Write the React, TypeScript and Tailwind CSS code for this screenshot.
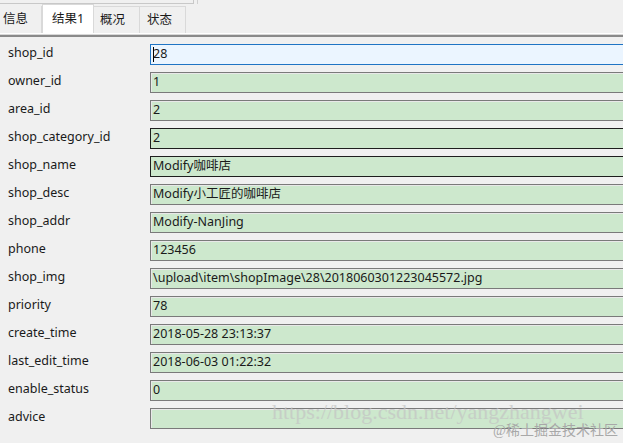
import React from "react";

const rows: { label: string; value: string; kind?: "focus" | "dark" }[] = [
  { label: "shop_id", value: "28", kind: "focus" },
  { label: "owner_id", value: "1" },
  { label: "area_id", value: "2" },
  { label: "shop_category_id", value: "2", kind: "dark" },
  { label: "shop_name", value: "Modify咖啡店", kind: "dark" },
  { label: "shop_desc", value: "Modify小工匠的咖啡店" },
  { label: "shop_addr", value: "Modify-NanJing" },
  { label: "phone", value: "123456" },
  { label: "shop_img", value: "\\upload\\item\\shopImage\\28\\2018060301223045572.jpg" },
  { label: "priority", value: "78" },
  { label: "create_time", value: "2018-05-28 23:13:37" },
  { label: "last_edit_time", value: "2018-06-03 01:22:32" },
  { label: "enable_status", value: "0" },
  { label: "advice", value: "" },
];

const font = { fontFamily: '"Noto Sans", "Noto Sans CJK SC", sans-serif' };

export default function App() {
  return (
    <div
      className="relative w-[623px] h-[443px] overflow-hidden bg-[#f0f0f0] text-[12.5px] text-[#1a1a1a]"
      style={font}
    >
      {/* top strip */}
      <div className="flex h-[4px]">
        <div className="w-[194px] border-b border-r border-[#c8c8c8] bg-[#f0f0f0]" />
        <div className="w-[3px]" />
        <div className="w-[1px] bg-[#d0d0d0]" />
      </div>
      {/* tabs */}
      <div className="flex h-[29px] items-end">
        <div className="flex h-[27px] w-[42px] items-center border-r border-[#d9d9d9] pl-[3px] leading-none">
          信息
        </div>
        <div className="flex h-[29px] w-[52px] items-center justify-center border-x border-t border-[#d9d9d9] bg-white leading-none">
          结果1
        </div>
        <div className="flex h-[27px] w-[46px] items-center border-r border-t border-[#d9d9d9] pl-[6px] leading-none">
          概况
        </div>
        <div className="flex h-[27px] w-[46px] items-center border-r border-t border-[#d9d9d9] pl-[7px] leading-none">
          状态
        </div>
      </div>
      <div className="h-[1px] bg-white" />
      <div className="h-[1px] bg-[#d8d8d8]" />
      <div className="h-[2px] bg-[#8a8a8a]" />
      {/* rows */}
      <div className="flex flex-col gap-[7px] pt-[7px]">
        {rows.map((r) => (
          <div key={r.label} className="flex h-[21px] items-center">
            <div className="w-[150px] shrink-0 pl-[8px] -mt-[3px] leading-none">{r.label}</div>
            <div
              className={
                r.kind === "focus"
                  ? "flex h-[21px] flex-1 -mr-[4px] items-center border border-[#1f74c4] bg-[#ebf5ff] pl-[2px] leading-none"
                  : r.kind === "dark"
                  ? "flex h-[21px] flex-1 -mr-[4px] items-center border border-[#1e1e1e] bg-[#cde8cd] pl-[2px] leading-none"
                  : "flex h-[21px] flex-1 -mr-[4px] items-center border border-[#7a7a7a] bg-[#cde8cd] pl-[2px] leading-none shadow-[inset_1px_1px_0_#e8e8e8]"
              }
            >
              {r.kind === "focus" ? (
                <span className="flex items-center">
                  <span className="inline-block h-[15px] w-[1px] bg-black -mr-[1px]" />
                  {r.value}
                </span>
              ) : (
                r.value
              )}
            </div>
          </div>
        ))}
      </div>
      {/* watermarks */}
      <div
        className="pointer-events-none absolute left-[272px] top-[401px] whitespace-nowrap text-[22px] leading-none text-[#c4c4c4] opacity-70"
        style={{ fontFamily: '"Liberation Serif", serif' }}
      >
        https://blog.csdn.net/yangzhangwei
      </div>
      <div
        className="pointer-events-none absolute right-[5px] top-[424px] whitespace-nowrap text-[14px] leading-none text-[#a8a8a8]"
        style={{ fontFamily: '"Liberation Serif", "Noto Sans CJK SC", serif' }}
      >
        @稀土掘金技术社区
      </div>
    </div>
  );
}
